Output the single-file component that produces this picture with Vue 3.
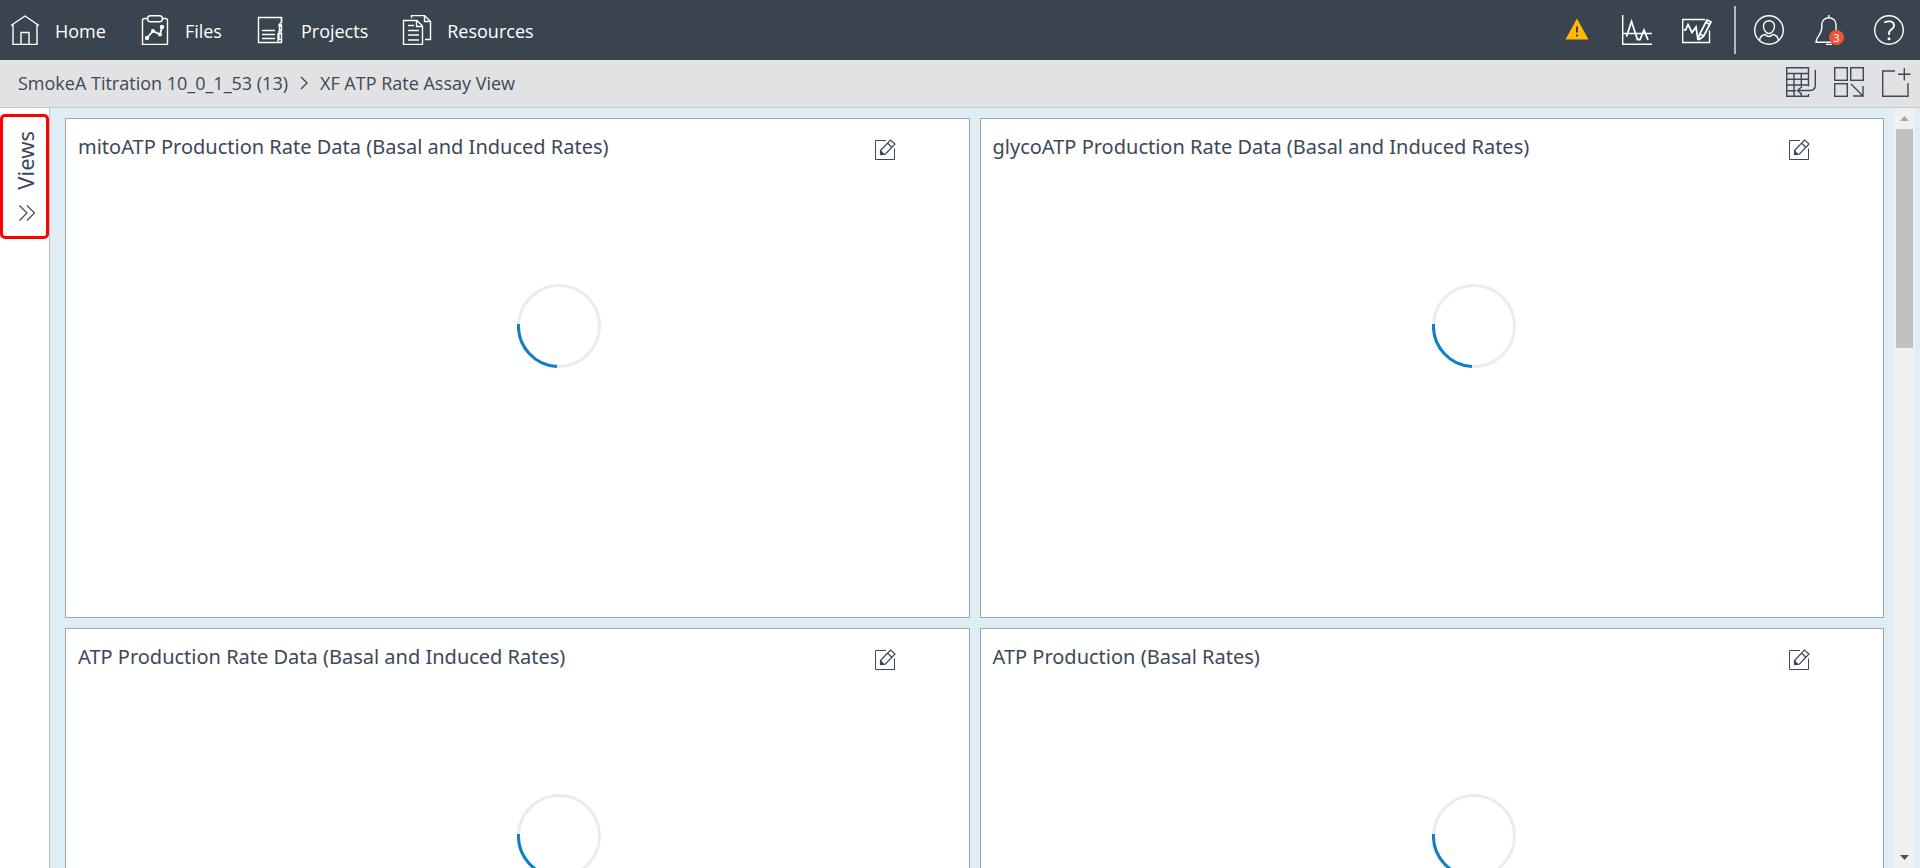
<script setup>
const cards = [
  'mitoATP Production Rate Data (Basal and Induced Rates)',
  'glycoATP Production Rate Data (Basal and Induced Rates)',
  'ATP Production Rate Data (Basal and Induced Rates)',
  'ATP Production (Basal Rates)',
]
</script>

<template>
  <div class="page">
    <header class="topbar">
      <nav class="nav" aria-label="Main">
        <a href="#" class="nav-link">
          <svg class="icon" viewBox="0 0 30 30" aria-hidden="true">
            <path d="M1 10.5 L15 1 L29 10.5 M3 9.5 V29.5 H27 V9.5 M11 29 V17.5 H19 V29" />
          </svg>
          <span>Home</span>
        </a>
        <a href="#" class="nav-link">
          <svg class="icon" viewBox="0 0 30 30" aria-hidden="true">
            <path d="M7.500 3.500 H4.500 Q2.500 3.500 2.500 5.500 V29.500 H27.500 V5.500 Q27.500 3.500 25.500 3.500 H22.500" />
            <rect x="7.500" y="0.700" width="15" height="6" rx="3" />
            <path class="bold" d="M7 23 L13 16 L20 19.500 L22 12" />
            <g class="solid">
              <circle cx="7" cy="23" r="2.200" /><circle cx="13" cy="16" r="2" />
              <circle cx="20" cy="19.500" r="2" /><circle cx="22" cy="12" r="2.200" />
            </g>
          </svg>
          <span>Files</span>
        </a>
        <a href="#" class="nav-link">
          <svg class="icon" viewBox="0 0 30 30" aria-hidden="true">
            <path d="M25.500 8 V2.500 H2.500 V27.500 H25.500 V25" />
            <path d="M6 15.500 H19 M6 19.500 H19 M6 23.500 H19" />
            <path d="M25.500 3 V7.500 L23 9.500 V11 L25.500 11.500 V15 L23 16 V18 L25.500 19 M22 18 V27 M25.500 10 V16 H23.500 V10 Z M25.500 18 V24.500 H23 V18 Z" />
          </svg>
          <span>Projects</span>
        </a>
        <a href="#" class="nav-link">
          <svg class="icon" viewBox="0 0 30 30" aria-hidden="true">
            <path d="M1.500 5.500 H15 L20.500 11 V29.500 H1.500 Z M14.500 5.500 V11.500 H20.500" />
            <path d="M6 10.500 H12 M6 15.500 H17 M6 20 H17 M6 25 H17" />
            <path d="M9.500 3 V0.600 H22.500 L28.500 6.500 V24.500 H23 M22.500 1 V6.500 H28" />
          </svg>
          <span>Resources</span>
        </a>
      </nav>
      <div class="tools">
        <button type="button" class="icon-button" aria-label="Warnings">
          <svg class="icon" viewBox="0 0 30 30" aria-hidden="true">
            <path class="warning" d="M15 3.500 L26.500 24.500 H3.500 Z" />
            <path class="warning-mark" d="M15 11.500 V17.500 M15 19.500 V21.500" />
          </svg>
        </button>
        <button type="button" class="icon-button" aria-label="Analysis">
          <svg class="icon" viewBox="0 0 30 30" aria-hidden="true">
            <path d="M0.700 0 V29.300 H30 M0 18.500 H30" />
            <path class="bold" d="M4.500 21.500 L9.500 6.500 L15.500 24.500 H18 L22 15 L26 25" />
          </svg>
        </button>
        <button type="button" class="icon-button" aria-label="Edit graph">
          <svg class="icon" viewBox="0 0 30 30" aria-hidden="true">
            <path d="M23 4.500 H0.700 V27.500 H27.500 V15.500" />
            <path class="bold" d="M2 15 H3.500 L6 9.500 L10 17.500 L14 12 L16 25" />
            <path class="bold" d="M16 25 L17.500 19.500 L25 5 L29 7 L21.500 21.500 L16.500 25 M24 7.500 L28 9.500 M18 19 L21.500 21" />
          </svg>
        </button>
        <span class="divider"></span>
        <button type="button" class="icon-button" aria-label="Account">
          <svg class="icon" viewBox="0 0 30 30" aria-hidden="true">
            <circle cx="15" cy="15" r="14.300" />
            <path d="M9.500 11.500 C9 3.800 21 3.800 20.500 11.500 C20.300 14.500 18.300 18.500 15 18.500 C11.700 18.500 9.700 14.500 9.500 11.500 Z" />
            <path d="M5.500 25.500 C6 22 7 20.200 11 19.500 C13.500 22 16.500 22 19 19.500 C23 20.200 24 22 24.500 25.500" />
          </svg>
        </button>
        <button type="button" class="icon-button" aria-label="Notifications">
          <svg class="icon" viewBox="0 0 30 30" aria-hidden="true">
            <path d="M14.800 0 V2.500 M2 27.300 H26 C26 23 22 20 22 13 V9.500 C22 0.500 7.800 0.500 7.800 9.500 V13 C7.800 20 2 21 2 27.300 Z M12 29.400 H18" />
          </svg>
          <span class="badge">3</span>
        </button>
        <button type="button" class="icon-button" aria-label="Help">
          <svg class="icon" viewBox="0 0 30 30" aria-hidden="true">
            <circle cx="15" cy="15" r="14.300" />
            <path class="bold" d="M10.200 7.500 C14 5.500 20 5.800 20 10.500 C20 14.500 15 14.500 15 18 V20" />
            <circle class="solid" cx="15" cy="23.800" r="1.500" />
          </svg>
        </button>
      </div>
    </header>

    <div class="subbar">
      <nav class="crumbs" aria-label="Breadcrumb">
        <a href="#">SmokeA Titration 10_0_1_53 (13)</a>
        <svg class="crumb-arrow" viewBox="0 0 8 14" aria-hidden="true"><path d="M1 1 L7 7 L1 13" /></svg>
        <span>XF ATP Rate Assay View</span>
      </nav>
      <div class="actions">
        <button type="button" class="icon-button" aria-label="Modify assay table">
          <svg class="icon" viewBox="0 0 30 30" aria-hidden="true">
            <path d="M22.500 19.500 V0.700 H0.700 V29.300 H22.500 V27 M0.700 6.500 H22.500 M0.700 12.300 H22.500 M0.700 18 H22.500 M0.700 23.700 H10 M8 6.500 V29 M15.300 6.500 V19 M15.300 26 V29" />
            <path d="M29.300 3 V18 Q29.300 23.500 24 23.500 H11.500 M16 19.500 L11.500 23.500 L16 27.500" />
          </svg>
        </button>
        <button type="button" class="icon-button" aria-label="Arrange widgets">
          <svg class="icon" viewBox="0 0 30 30" aria-hidden="true">
            <rect x="0.700" y="0.700" width="12.600" height="12.600" /><rect x="16.700" y="0.700" width="12.600" height="12.600" />
            <rect x="0.700" y="16.700" width="12.600" height="12.600" />
            <path d="M17 17 L29 29 M29 19 V29 H19" />
          </svg>
        </button>
        <button type="button" class="icon-button" aria-label="Add widget">
          <svg class="icon" viewBox="0 0 30 30" aria-hidden="true">
            <path d="M13 4 H0.700 V29.300 H26 V16 M16 7.300 H28.500 M22.300 1 V13.500" />
          </svg>
        </button>
      </div>
    </div>

    <div class="body">
      <aside class="sidebar">
        <button type="button" class="views">
          <span class="views-label">Views</span>
          <svg class="views-arrow" viewBox="0 0 16 16" aria-hidden="true"><path d="M0.500 0.500 L8 8 L0.500 15.500 M8 0.500 L15.500 8 L8 15.500" /></svg>
        </button>
      </aside>
      <main class="board">
        <section v-for="title in cards" :key="title" class="card">
          <div class="card-head">
            <h2>{{ title }}</h2>
            <button type="button" class="edit" :aria-label="'Edit ' + title">
              <svg viewBox="0 0 22 22" aria-hidden="true">
                <path class="frame" d="M12 1.500 H1.500 V20.500 H20.500 V9.500" />
                <path d="M7 11 L16.500 1 L21 5 L11.500 15 L7 15.500 Z M13.500 4 L18 8.500" />
                <path class="tip" d="M6.500 12 L10 15.500 H6.500 Z" />
              </svg>
            </button>
          </div>
          <svg class="spinner" viewBox="0 0 84 84" role="img" aria-label="Loading">
            <circle cx="42" cy="42" r="40.500" />
            <path d="M1.500 40 A40.500 40.500 0 0 0 40 82.500" />
          </svg>
        </section>
      </main>
      <div class="scrollbar">
        <button type="button" aria-label="Scroll up">
          <svg viewBox="0 0 9 5" aria-hidden="true"><path d="M0 5 L4.500 0 L9 5 Z" /></svg>
        </button>
        <div class="track"><div class="thumb"></div></div>
        <button type="button" class="down" aria-label="Scroll down">
          <svg viewBox="0 0 9 5" aria-hidden="true"><path d="M0 0 L4.500 5 L9 0 Z" /></svg>
        </button>
      </div>
    </div>
  </div>
</template>

<style>
body {
  margin: 0;
}
</style>

<style scoped>
.page {
  display: flex;
  flex-direction: column;
  height: 100vh;
  overflow: hidden;
  background: #e0edf5;
  color: #3c4857;
  font-family: "Noto Sans", "Open Sans", sans-serif;
  font-size: 18px;
  line-height: 24px;
}
.page * {
  box-sizing: border-box;
}
a {
  color: inherit;
  text-decoration: none;
}
button {
  padding: 0;
  border: 0;
  background: none;
  color: inherit;
  font: inherit;
  cursor: pointer;
}
svg {
  display: block;
  flex: none;
  fill: none;
  stroke: currentColor;
  stroke-width: 1.4;
}
.topbar {
  display: flex;
  flex: none;
  align-items: center;
  justify-content: space-between;
  height: 60px;
  padding: 0 16px 0 10px;
  background: #39444f;
  color: #fff;
}
.nav {
  display: flex;
  gap: 34px;
}
.nav,
.crumbs {
  font-family: "Open Sans", "Noto Sans", sans-serif;
}
.nav-link {
  display: flex;
  align-items: center;
  gap: 15px;
}
.nav-link span {
  padding-top: 2px;
}
.icon {
  width: 30px;
  height: 30px;
}
.icon .bold {
  stroke-width: 1.8;
}
.icon .solid {
  fill: currentColor;
  stroke: none;
}
.icon .warning {
  fill: #ffb805;
  stroke: none;
}
.icon .warning-mark {
  stroke: #39444f;
  stroke-width: 2;
}
.tools {
  display: flex;
  align-items: center;
  gap: 30px;
}
.icon-button {
  position: relative;
}
.divider {
  width: 2px;
  height: 48px;
  margin: 0 -12px 0 -8px;
  background: #b4b9be;
}
.badge {
  position: absolute;
  right: 0;
  bottom: 0;
  width: 15px;
  height: 15px;
  border-radius: 50%;
  background: #f0523a;
  color: #fff;
  font-size: 11px;
  line-height: 15px;
  text-align: center;
}
.subbar {
  display: flex;
  flex: none;
  align-items: center;
  justify-content: space-between;
  height: 48px;
  padding: 0 8px 2px 18px;
  border-bottom: 1px solid #c5c8cb;
  background: #e1e2e4;
}
.crumbs {
  display: flex;
  align-items: center;
  gap: 12px;
}
.crumb-arrow {
  width: 8px;
  height: 14px;
}
.actions {
  display: flex;
  gap: 18px;
  padding-bottom: 2px;
}
.body {
  display: flex;
  flex: 1;
  min-height: 0;
  padding-right: 5px;
}
.sidebar {
  flex: none;
  width: 50px;
  padding-top: 6px;
  border-right: 1px solid #bcc1c6;
  background: #fff;
}
.views {
  display: flex;
  flex-direction: column;
  align-items: center;
  gap: 15px;
  width: 100%;
  padding: 14px 0 15px 4px;
  border: 3px solid #f00;
  border-radius: 5px;
}
.views-label {
  margin-right: 4px;
  writing-mode: vertical-rl;
  transform: rotate(180deg);
  font-size: 22px;
}
.views-arrow {
  width: 16px;
  height: 16px;
  stroke-width: 1.2;
}
.board {
  display: grid;
  flex: 1;
  grid-template-columns: 1fr 1fr;
  grid-auto-rows: 500px;
  gap: 10px;
  padding: 10px 10px 0 15px;
  overflow: hidden;
}
.card {
  border: 1px solid #9ba6b0;
  background: #fff;
}
.card-head {
  display: flex;
  align-items: center;
  justify-content: space-between;
  padding: 14px 73px 0 12px;
}
h2 {
  margin: 0;
  font-size: 20px;
  font-weight: 400;
  line-height: 28px;
}
.edit {
  margin-top: 6px;
}
.edit svg {
  width: 22px;
  height: 22px;
  stroke-width: 1.2;
}
.edit .frame {
  stroke-width: 1;
}
.edit .tip {
  fill: currentColor;
}
.spinner {
  width: 84px;
  height: 84px;
  margin: 123px 0 0 50%;
  stroke-width: 3;
}
.spinner circle {
  stroke: #ebecec;
}
.spinner path {
  stroke: #0f80c8;
}
.scrollbar {
  display: flex;
  flex: none;
  flex-direction: column;
  width: 21px;
  background: #f0f0f0;
}
.scrollbar button {
  display: flex;
  align-items: center;
  justify-content: center;
  height: 21px;
  color: #a3a3a3;
}
.scrollbar .down {
  color: #505050;
}
.scrollbar svg {
  width: 9px;
  height: 5px;
  fill: currentColor;
  stroke: none;
}
.track {
  flex: 1;
  padding: 0 2px;
}
.thumb {
  height: 30.5%;
  background: #c1c1c1;
}
</style>
